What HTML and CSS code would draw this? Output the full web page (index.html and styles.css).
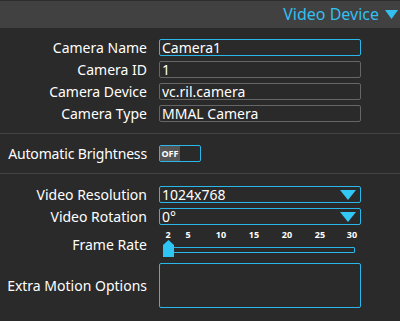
FILE: index.html
```html
<!DOCTYPE html>
<html lang="en">
<head>
   <meta charset="UTF-8">
   <meta name="viewport" content="width=device-width, initial-scale=1.0">
   <title>Video Device</title>
   <link rel="stylesheet" href="styles.css">
</head>
<body>
   <div class="header">
      <span class="title">Video Device</span>
      <svg class="caret" width="13" height="9" viewBox="0 0 13 9"><polygon points="0,0 13,0 6.5,9" fill="#33bff0"/></svg>
   </div>

   <div class="section">
      <div class="row">
         <label>Camera Name</label>
         <input class="field focus" type="text" value="Camera1">
      </div>
      <div class="row">
         <label>Camera ID</label>
         <input class="field" type="text" value="1">
      </div>
      <div class="row">
         <label>Camera Device</label>
         <input class="field" type="text" value="vc.ril.camera">
      </div>
      <div class="row">
         <label>Camera Type</label>
         <input class="field" type="text" value="MMAL Camera">
      </div>
   </div>

   <div class="section">
      <div class="row">
         <label class="narrow">Automatic Brightness</label>
         <div class="toggle"><span class="off">OFF</span></div>
      </div>
   </div>

   <div class="section">
      <div class="row">
         <label>Video Resolution</label>
         <div class="select"><span>1024x768</span>
            <svg width="16" height="10" viewBox="0 0 16 10"><polygon points="0,0 16,0 8,10" fill="#33c7f5"/></svg>
         </div>
      </div>
      <div class="row">
         <label>Video Rotation</label>
         <div class="select"><span>0°</span>
            <svg width="16" height="10" viewBox="0 0 16 10"><polygon points="0,0 16,0 8,10" fill="#33c7f5"/></svg>
         </div>
      </div>
      <div class="row rate">
         <label>Frame Rate</label>
         <div class="slider">
            <span class="tick" style="left: 9px">2</span>
            <span class="tick" style="left: 29px">5</span>
            <span class="tick" style="left: 62px">10</span>
            <span class="tick" style="left: 95px">15</span>
            <span class="tick" style="left: 128px">20</span>
            <span class="tick" style="left: 161px">25</span>
            <span class="tick" style="left: 193px">30</span>
            <div class="track"></div>
            <svg class="thumb" width="11" height="17" viewBox="0 0 11 17"><polygon points="0,5 5.5,0 11,5 11,17 0,17" fill="#2ec5f5"/></svg>
         </div>
      </div>
      <div class="row">
         <label>Extra Motion Options</label>
         <textarea class="area"></textarea>
      </div>
   </div>
</body>
</html>
```

FILE: styles.css
```css
body {
   margin: 0;
   background: #2a2a2a;
   font-family: "Noto Sans", "Open Sans", sans-serif;
   font-size: 14px;
   line-height: 17px;
   color: #fff;
}

.header {
   height: 28px;
   border-top: 1px solid #2e2e2e;
   background: #414141;
   display: flex;
   align-items: center;
   justify-content: flex-end;
   gap: 6px;
   padding-right: 2px;
   box-sizing: border-box;
}

.header .title {
   color: #33bff0;
   font-size: 16px;
}

.section {
   display: flex;
   flex-direction: column;
   gap: 5px;
   padding: 11px 0;
   border-bottom: 1px solid #444;
}

.section:first-of-type {
   padding-bottom: 12px;
}

.section:last-child {
   border-bottom: 0;
   padding-top: 12px;
}

.row {
   display: grid;
   grid-template-columns: 147px 202px;
   column-gap: 12px;
   align-items: center;
}

.row > label {
   text-align: right;
   white-space: nowrap;
}

.row > label.narrow {
   letter-spacing: -0.15px;
}

.field {
   height: 17px;
   box-sizing: border-box;
   margin: 0;
   padding: 0 2px;
   border: 1px solid #666;
   border-radius: 2px;
   background: #2a2a2a;
   color: #fff;
   font: inherit;
   line-height: 15px;
   outline: none;
}

.field.focus {
   border-color: #2ab8ea;
}

.toggle {
   width: 42px;
   height: 17px;
   box-sizing: border-box;
   border: 1px solid #2ab8ea;
   border-radius: 2px;
}

.toggle .off {
   display: block;
   width: 20px;
   height: 100%;
   background: #555;
   font-size: 9px;
   font-weight: bold;
   line-height: 15px;
   text-align: center;
}

.select {
   height: 17px;
   box-sizing: border-box;
   border: 1px solid #2ab8ea;
   border-radius: 2px;
   display: flex;
   align-items: center;
   justify-content: space-between;
   padding: 0 4px 0 2px;
}

.rate {
   margin-top: -1px;
}

.rate label {
   padding-top: 2px;
}

.slider {
   position: relative;
   height: 29px;
}

.tick {
   position: absolute;
   top: 0;
   transform: translateX(-50%);
   font-size: 9px;
   font-weight: bold;
   line-height: 11px;
}

.track {
   position: absolute;
   left: 11px;
   right: 6px;
   top: 18px;
   height: 6px;
   box-sizing: border-box;
   border: 1px solid #2ab8ea;
   border-radius: 1px;
}

.thumb {
   position: absolute;
   left: 4px;
   top: 11px;
}

.area {
   height: 45px;
   box-sizing: border-box;
   margin: 0;
   border: 1px solid #2ab8ea;
   border-radius: 2px;
   background: #2a2a2a;
   resize: none;
   color: #fff;
   font: inherit;
   display: block;
}
```
